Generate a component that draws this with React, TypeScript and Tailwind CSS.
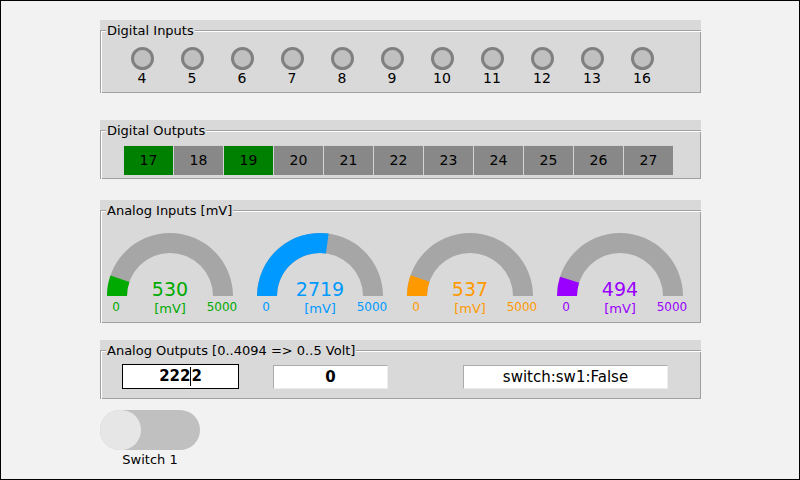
import React from "react";

const inputs = [4, 5, 6, 7, 8, 9, 10, 11, 12, 13, 16];

const outputs = [
    { n: 17, on: true },
    { n: 18, on: false },
    { n: 19, on: true },
    { n: 20, on: false },
    { n: 21, on: false },
    { n: 22, on: false },
    { n: 23, on: false },
    { n: 24, on: false },
    { n: 25, on: false },
    { n: 26, on: false },
    { n: 27, on: false },
];

const gauges = [
    { value: 530, color: "#00aa00" },
    { value: 2719, color: "#0099ff" },
    { value: 537, color: "#ff9900" },
    { value: 494, color: "#9900ff" },
];

// annular sector starting at the left end, sweeping over the top
const sector = (cx: number, cy: number, r: number, ri: number, frac: number) => {
    const a = Math.PI - frac * Math.PI;
    const ox = cx + r * Math.cos(a);
    const oy = cy - r * Math.sin(a);
    const ix = cx + ri * Math.cos(a);
    const iy = cy - ri * Math.sin(a);
    return `M ${cx - r} ${cy} A ${r} ${r} 0 0 1 ${ox} ${oy} L ${ix} ${iy} A ${ri} ${ri} 0 0 0 ${cx - ri} ${cy} Z`;
};

const Gauge = ({ value, color }: { value: number; color: string }) => {
    const cx = 69;
    const cy = 85;
    return (
        <svg width="150" height="110" className="shrink-0">
            <path d={sector(cx, cy, 63, 43, 1)} fill="#a6a6a6" />
            <path d={sector(cx, cy, 63, 43, value / 5000)} fill={color} />
            <g fontFamily="DejaVu Sans, sans-serif" fill={color} textAnchor="middle">
                <text x={cx} y={cy} fontSize="19">
                    {value}
                </text>
                <text x={cx} y={cy + 17} fontSize="13">
                    [mV]
                </text>
                <text x={cx - 54} y={cy + 15} fontSize="12">
                    0
                </text>
                <text x={cx + 52} y={cy + 15} fontSize="12">
                    5000
                </text>
            </g>
        </svg>
    );
};

const Section = ({
    title,
    height,
    className,
    children,
}: {
    title: string;
    height: string;
    className?: string;
    children: React.ReactNode;
}) => {
    return (
        <div className={`ml-[99px] w-[601px] bg-[#d9d9d9] pt-[10px] ${className ?? ""}`}>
            <div
                className={`relative ${height} border-t border-l border-[#a0a0a0] border-r-white border-b-white shadow-[inset_1px_1px_0_#ffffff,inset_-1px_-1px_0_#a0a0a0]`}
            >
                <span className="absolute left-[5px] top-[-8px] bg-[#d9d9d9] px-px text-[13px] leading-[15px] text-black">
                    {title}
                </span>
                {children}
            </div>
        </div>
    );
};

export default function App() {
    return (
        <div className="w-[800px] h-[480px] overflow-hidden bg-[#f2f2f2] border border-black pt-[19px] font-['DejaVu_Sans',sans-serif] text-black">
            <Section title="Digital Inputs" height="h-[63px]">
                <div className="flex pl-[16px] pt-[16px]">
                    {inputs.map((n) => (
                        <div key={n} className="w-[50px] flex flex-col items-center">
                            <div className="w-[23px] h-[23px] rounded-full border-[3px] border-[#808080] bg-[#c0c0c0]" />
                            <span className="text-[14px] leading-[16px]">{n}</span>
                        </div>
                    ))}
                </div>
            </Section>

            <Section title="Digital Outputs" height="h-[49px]" className="mt-[27px]">
                <div className="flex pl-[22px] pt-[14px]">
                    {outputs.map((o) => (
                        <div
                            key={o.n}
                            className={`w-[50px] h-[30px] flex items-center justify-center text-[14px] border-t border-l border-[#d4d4d4] border-r-[#666666] border-b-[#666666] ${
                                o.on ? "bg-[#008000]" : "bg-[#888888]"
                            }`}
                        >
                            {o.n}
                        </div>
                    ))}
                </div>
            </Section>

            <Section title="Analog Inputs [mV]" height="h-[113px]" className="mt-[21px]">
                <div className="flex">
                    {gauges.map((g, i) => (
                        <Gauge key={i} value={g.value} color={g.color} />
                    ))}
                </div>
            </Section>

            <Section
                title="Analog Outputs [0..4094 => 0..5 Volt]"
                height="h-[49px]"
                className="mt-[17px]"
            >
                <div className="flex items-start pl-[21px] pt-[13px]">
                    <div className="w-[117px] h-[25px] bg-white border border-black flex items-center justify-center text-[15px] font-bold">
                        222
                        <span className="inline-block w-px h-[19px] bg-black" />
                        2
                    </div>
                    <div className="ml-[34px] mt-px w-[115px] h-[24px] bg-white border border-[#ababab] border-r-[#ececec] border-b-[#ececec] flex items-center justify-center text-[15px] font-bold">
                        0
                    </div>
                    <div className="ml-[75px] mt-px w-[205px] h-[24px] bg-white border border-[#ababab] border-r-[#ececec] border-b-[#ececec] flex items-center justify-center text-[15px]">
                        switch:sw1:False
                    </div>
                </div>
            </Section>

            <div className="ml-[99px] mt-[11px] w-[100px] flex flex-col items-center">
                <div className="w-[100px] h-[40px] rounded-full bg-[#c0c0c0] flex">
                    <div className="w-[41px] h-[40px] rounded-full bg-[#e6e6e6]" />
                </div>
                <span className="mt-[2px] text-[13px] leading-[15px]">Switch 1</span>
            </div>
        </div>
    );
}
